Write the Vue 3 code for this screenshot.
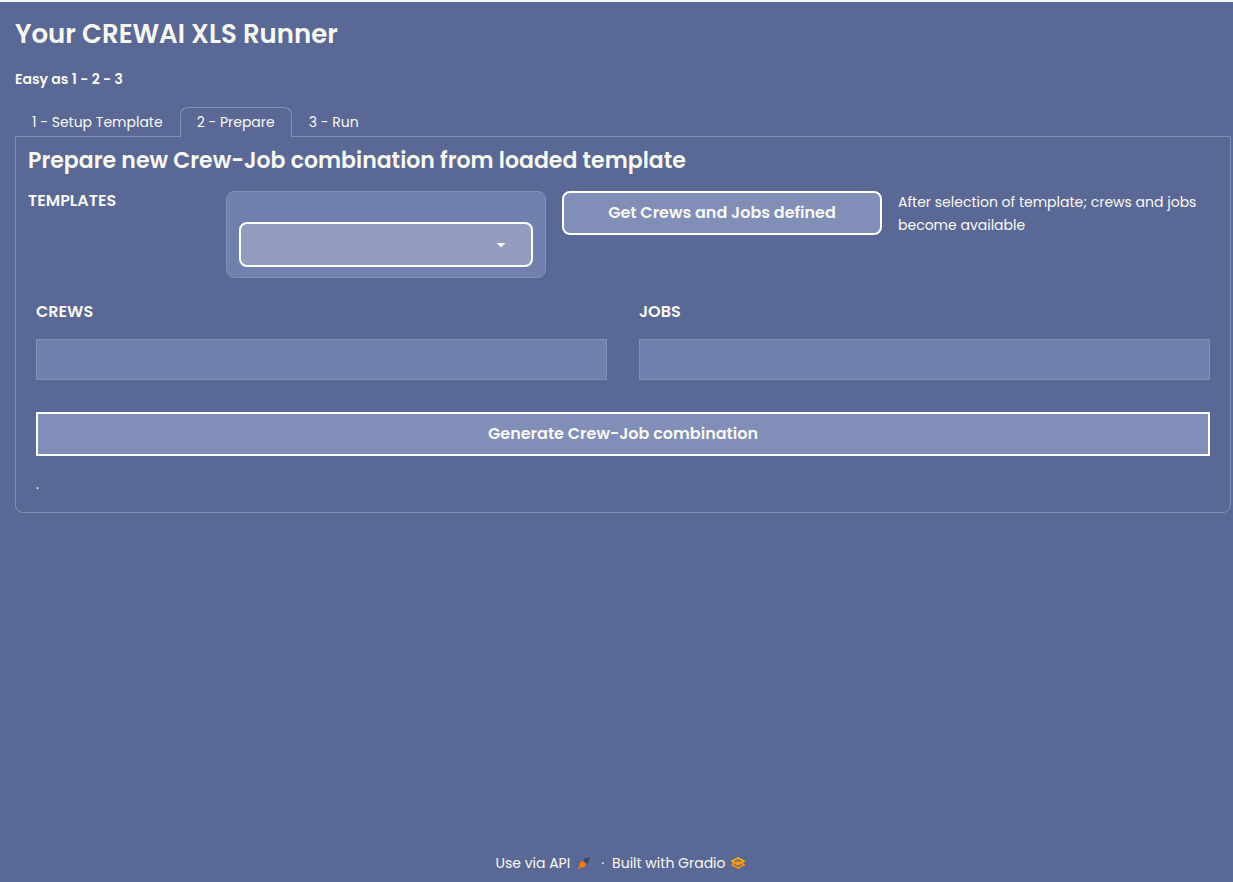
<script setup>
import { ref } from 'vue'

const tabs = ['1 - Setup Template', '2 - Prepare', '3 - Run']
const active = ref(1)
const template = ref('')
const crews = ref('')
const jobs = ref('')
</script>

<template>
  <div class="app">
    <main class="main">
      <h1>Your CREWAI XLS Runner</h1>
      <p class="tagline">Easy as 1 - 2 - 3</p>

      <div class="tabs" role="tablist">
        <button
          v-for="(tab, i) in tabs"
          :key="tab"
          type="button"
          role="tab"
          class="tab"
          :class="{ selected: active === i }"
          :aria-selected="active === i"
          @click="active = i"
        >{{ tab }}</button>
      </div>

      <section class="panel" role="tabpanel">
        <h2>Prepare new Crew-Job combination from loaded template</h2>

        <div class="template-row">
          <label class="heading" for="template">TEMPLATES</label>
          <div class="select-block">
            <div class="select-wrap">
              <select id="template" v-model="template">
                <option value=""></option>
              </select>
              <svg class="caret" viewBox="0 0 18 18" aria-hidden="true">
                <path d="M4.500 7h9l-4.500 4.500z" />
              </svg>
            </div>
          </div>
          <button type="button" class="btn rounded">Get Crews and Jobs defined</button>
          <p class="hint">After selection of template; crews and jobs become available</p>
        </div>

        <div class="group">
          <div class="columns">
            <div class="field">
              <label class="heading" for="crews">CREWS</label>
              <input id="crews" v-model="crews" type="text" />
            </div>
            <div class="field">
              <label class="heading" for="jobs">JOBS</label>
              <input id="jobs" v-model="jobs" type="text" />
            </div>
          </div>
          <button type="button" class="btn">Generate Crew-Job combination</button>
          <p class="status">.</p>
        </div>
      </section>
    </main>

    <footer class="footer">
      <a href="#api">Use via API
        <svg class="rocket" viewBox="0 0 14 14" aria-hidden="true">
          <path fill="#3c4963" d="M6 4 8 1.5 11 1 14 0 13 3 12.5 6 10 8z" />
          <path fill="#ff7c00" d="M2 7.5 4 5h2l3 3v2L6.500 12H4L1 14l-1-1 2-2.500z" />
        </svg>
      </a>
      <span class="dot">·</span>
      <a href="#gradio">Built with Gradio
        <svg class="gradio" viewBox="0 0 14 12" aria-hidden="true">
          <path fill="none" stroke="#ffb000" stroke-width="1.800" stroke-linejoin="round" d="M7 1 13 4.200 7 7.400 1 4.200z" />
          <path fill="none" stroke="#ff8c00" stroke-width="1.800" stroke-linejoin="round" d="M7 4.600 13 7.800 7 11 1 7.800z" />
        </svg>
      </a>
    </footer>
  </div>
</template>

<style>
body {
  background: #5a6895;
}
</style>

<style scoped>
* {
  box-sizing: border-box;
}

.app {
  min-height: 100vh;
  display: flex;
  flex-direction: column;
  padding: 14px 2px 7px 15px;
  border-top: 2px solid #f4f5f8;
  background: #5a6895;
  color: #f8f8f2;
  font: 14px/24px Poppins, Inter, sans-serif;
}

.main {
  flex: 1;
}

h1,
h2,
p {
  margin: 0;
}

h1 {
  font-size: 26px;
  line-height: 36px;
  font-weight: 600;
}

.tagline {
  margin-top: 15px;
  font-weight: 600;
}

.tabs {
  display: flex;
  margin-top: 16px;
}

.tab {
  height: 30px;
  padding: 0 16px 2px;
  margin-bottom: -1px;
  border: 1px solid transparent;
  border-bottom: 0;
  border-radius: 8px 8px 0 0;
  background: transparent;
  color: inherit;
  font: inherit;
  white-space: nowrap;
}

.tab.selected {
  position: relative;
  border-color: #818eb8;
  background: #5a6895;
}

.panel {
  padding: 8px 12px;
  border: 1px solid #818eb8;
  border-radius: 0 0 8px 8px;
}

h2 {
  font-size: 22px;
  line-height: 32px;
  font-weight: 600;
}

.template-row {
  display: grid;
  grid-template-columns: 182fr 320fr 320fr 320fr;
  align-items: start;
  gap: 16px;
  margin-top: 14px;
}

.heading {
  font-size: 16px;
  line-height: 20px;
  font-weight: 600;
}

.select-block {
  padding: 30px 12px 10px;
  border: 1px solid #818eb8;
  border-radius: 8px;
  background: #7280ad;
}

.select-wrap {
  position: relative;
}

select {
  display: block;
  width: 100%;
  height: 45px;
  padding: 0 40px 0 12px;
  border: 2px solid #fff;
  border-radius: 8px;
  background: #939cbf;
  color: inherit;
  font: inherit;
  appearance: none;
}

.caret {
  position: absolute;
  top: 14px;
  right: 23px;
  width: 18px;
  fill: #f8f8f2;
  pointer-events: none;
}

.btn {
  height: 44px;
  padding: 0 16px;
  border: 2px solid #fff;
  background: #818eb8;
  color: inherit;
  font: inherit;
  font-size: 16px;
  font-weight: 600;
}

.btn.rounded {
  border-radius: 8px;
}

.hint {
  line-height: 23px;
}

.group {
  display: flex;
  flex-direction: column;
  padding: 24px 8px 8px;
}

.columns {
  display: grid;
  grid-template-columns: 1fr 1fr;
  gap: 32px;
  margin-bottom: 32px;
}

.field {
  display: flex;
  flex-direction: column;
  gap: 17px;
}

input {
  width: 100%;
  height: 41px;
  padding: 0 12px;
  border: 1px solid #818eb8;
  background: #7280ad;
  color: inherit;
  font: inherit;
}

.status {
  margin-top: 16px;
  line-height: 24px;
}

.footer {
  display: flex;
  justify-content: center;
  align-items: center;
  gap: 8px;
  padding-right: 6px;
}

.footer a {
  display: flex;
  align-items: center;
  gap: 5px;
  color: inherit;
  text-decoration: none;
}

.rocket {
  width: 12px;
  height: 12px;
  margin: 0 3px;
}

.gradio {
  width: 14px;
  height: 12px;
}
</style>
